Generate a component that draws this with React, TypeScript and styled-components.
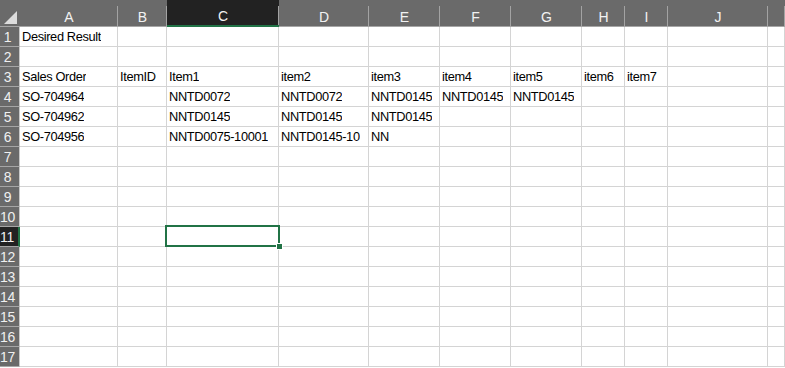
import { Fragment } from "react";
import styled, { createGlobalStyle } from "styled-components";

const GlobalStyle = createGlobalStyle`
    html, body {
        margin: 0;
        padding: 0;
        background: #ffffff;
        overflow: hidden;
    }
`

const COLUMNS = ["A", "B", "C", "D", "E", "F", "G", "H", "I", "J", ""];
const WIDTHS = [98, 49, 112, 90, 71, 71, 71, 43, 43, 100];

const ROWS: Record<number, string[]> = {
    1: ["Desired Result"],
    3: ["Sales Order", "ItemID", "Item1", "item2", "item3", "item4", "item5", "item6", "item7"],
    4: ["SO-704964", "", "NNTD0072", "NNTD0072", "NNTD0145", "NNTD0145", "NNTD0145"],
    5: ["SO-704962", "", "NNTD0145", "NNTD0145", "NNTD0145"],
    6: ["SO-704956", "", "NNTD0075-10001", "NNTD0145-10", "NN"],
};

const SELECTED_COL = 2;
const SELECTED_ROW = 11;

const Sheet = styled.div`
    display: grid;
    grid-template-columns: 20px ${WIDTHS.map((w) => `${w}px`).join(" ")} 1fr;
    grid-template-rows: 27px repeat(17, 20px);
    width: 785px;
    height: 368px;
    overflow: hidden;
    font-family: "Liberation Sans", Arial, sans-serif;
`

const Corner = styled.div`
    position: relative;
    background: #6a6a6a;
    border-bottom: 1px solid #a6a6a6;
    box-sizing: border-box;

    &::after {
        content: "";
        position: absolute;
        right: 3px;
        bottom: 2px;
        width: 13px;
        height: 13px;
        background: #dcdcdc;
        clip-path: polygon(100% 0, 100% 100%, 0 100%);
    }
`

const ColHeader = styled.div<{ $active?: boolean }>`
    position: relative;
    display: flex;
    align-items: center;
    justify-content: center;
    padding-top: 7px;
    box-sizing: border-box;
    background: ${(p) => (p.$active ? "#222222" : "#6a6a6a")};
    border-bottom: ${(p) => (p.$active ? "2px solid #217346" : "1px solid #a6a6a6")};
    color: #f2f2f2;
    font-size: 14px;

    &::after {
        content: "";
        position: absolute;
        top: 6px;
        right: 0;
        bottom: 0;
        width: 1px;
        background: #a3a3a3;
    }
`

const RowHeader = styled.div<{ $active?: boolean }>`
    display: flex;
    align-items: center;
    justify-content: center;
    padding-right: 4px;
    padding-top: 1px;
    box-sizing: border-box;
    background: ${(p) => (p.$active ? "#222222" : "#6a6a6a")};
    border-bottom: 1px solid #a6a6a6;
    border-right: ${(p) => (p.$active ? "2px solid #217346" : "1px solid #c8c8c8")};
    color: #f0f0f0;
    font-size: 14px;
    letter-spacing: -0.3px;
`

const Cell = styled.div`
    position: relative;
    display: flex;
    align-items: flex-end;
    padding: 0 0 2px 2px;
    box-sizing: border-box;
    border-right: 1px solid #d4d4d4;
    border-bottom: 1px solid #d4d4d4;
    color: #000000;
    font-size: 12.8px;
    letter-spacing: -0.35px;
    white-space: nowrap;
`

const CellText = styled.span`
    display: block;
    overflow: hidden;
    max-width: 100%;
`

const Selection = styled.div`
    position: absolute;
    top: -2px;
    left: -2px;
    right: -2px;
    bottom: -1px;
    border: 2px solid #217346;
    pointer-events: none;
    z-index: 2;
`

const FillHandle = styled.div`
    position: absolute;
    right: -5px;
    bottom: -5px;
    width: 5px;
    height: 5px;
    background: #217346;
    border: 1px solid #ffffff;
`

function App() {
    const rowNumbers = Array.from({ length: 17 }, (_, i) => i + 1);

    return (
        <>
            <GlobalStyle />
            <Sheet>
                <Corner />
                {COLUMNS.map((col, i) => (
                    <ColHeader key={`h${i}`} $active={i === SELECTED_COL}>{col}</ColHeader>
                ))}

                {rowNumbers.map((row) => (
                    <Fragment key={`r${row}`}>
                        <RowHeader $active={row === SELECTED_ROW}>{row}</RowHeader>
                        {COLUMNS.map((_, c) => {
                            const value = ROWS[row]?.[c] ?? "";
                            const selected = row === SELECTED_ROW && c === SELECTED_COL;
                            return (
                                <Cell key={`c${row}-${c}`}>
                                    {value && <CellText>{value}</CellText>}
                                    {selected && (
                                        <Selection>
                                            <FillHandle />
                                        </Selection>
                                    )}
                                </Cell>
                            )
                        })}
                    </Fragment>
                ))}
            </Sheet>
        </>
    )
}

export default App
